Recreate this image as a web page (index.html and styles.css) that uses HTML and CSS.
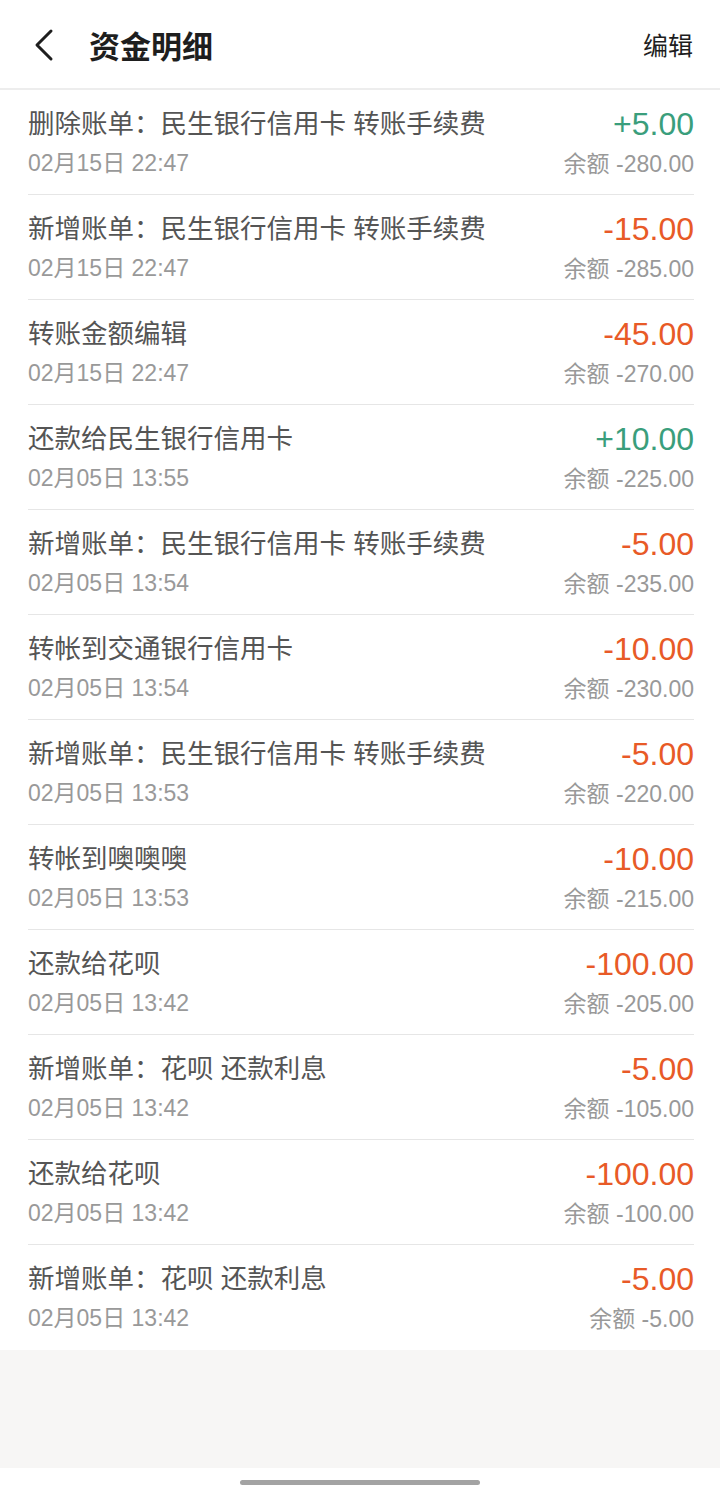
FILE: index.html
```html
<!DOCTYPE html>
<html lang="zh-CN">
<head>
  <meta charset="UTF-8">
  <meta name="viewport" content="width=device-width, initial-scale=1.0">
  <title>资金明细</title>
  <link rel="stylesheet" href="styles.css">
</head>
<body>
  <header class="top-bar">
    <svg class="back" width="24" height="36" viewBox="0 0 24 36">
      <path d="M19 4 L5 18 L19 32" fill="none" stroke="#1e1e1e" stroke-width="3" stroke-linecap="round" stroke-linejoin="round"/>
    </svg>
    <h1>资金明细</h1>
    <span class="edit">编辑</span>
  </header>

  <ul class="list">
    <li class="row">
      <div class="left"><div class="name">删除账单：民生银行信用卡 转账手续费</div><div class="time">02月15日 22:47</div></div>
      <div class="right"><div class="amount plus">+5.00</div><div class="balance">余额 -280.00</div></div>
    </li>
    <li class="row">
      <div class="left"><div class="name">新增账单：民生银行信用卡 转账手续费</div><div class="time">02月15日 22:47</div></div>
      <div class="right"><div class="amount minus">-15.00</div><div class="balance">余额 -285.00</div></div>
    </li>
    <li class="row">
      <div class="left"><div class="name">转账金额编辑</div><div class="time">02月15日 22:47</div></div>
      <div class="right"><div class="amount minus">-45.00</div><div class="balance">余额 -270.00</div></div>
    </li>
    <li class="row">
      <div class="left"><div class="name">还款给民生银行信用卡</div><div class="time">02月05日 13:55</div></div>
      <div class="right"><div class="amount plus">+10.00</div><div class="balance">余额 -225.00</div></div>
    </li>
    <li class="row">
      <div class="left"><div class="name">新增账单：民生银行信用卡 转账手续费</div><div class="time">02月05日 13:54</div></div>
      <div class="right"><div class="amount minus">-5.00</div><div class="balance">余额 -235.00</div></div>
    </li>
    <li class="row">
      <div class="left"><div class="name">转帐到交通银行信用卡</div><div class="time">02月05日 13:54</div></div>
      <div class="right"><div class="amount minus">-10.00</div><div class="balance">余额 -230.00</div></div>
    </li>
    <li class="row">
      <div class="left"><div class="name">新增账单：民生银行信用卡 转账手续费</div><div class="time">02月05日 13:53</div></div>
      <div class="right"><div class="amount minus">-5.00</div><div class="balance">余额 -220.00</div></div>
    </li>
    <li class="row">
      <div class="left"><div class="name">转帐到噢噢噢</div><div class="time">02月05日 13:53</div></div>
      <div class="right"><div class="amount minus">-10.00</div><div class="balance">余额 -215.00</div></div>
    </li>
    <li class="row">
      <div class="left"><div class="name">还款给花呗</div><div class="time">02月05日 13:42</div></div>
      <div class="right"><div class="amount minus">-100.00</div><div class="balance">余额 -205.00</div></div>
    </li>
    <li class="row">
      <div class="left"><div class="name">新增账单：花呗 还款利息</div><div class="time">02月05日 13:42</div></div>
      <div class="right"><div class="amount minus">-5.00</div><div class="balance">余额 -105.00</div></div>
    </li>
    <li class="row">
      <div class="left"><div class="name">还款给花呗</div><div class="time">02月05日 13:42</div></div>
      <div class="right"><div class="amount minus">-100.00</div><div class="balance">余额 -100.00</div></div>
    </li>
    <li class="row">
      <div class="left"><div class="name">新增账单：花呗 还款利息</div><div class="time">02月05日 13:42</div></div>
      <div class="right"><div class="amount minus">-5.00</div><div class="balance">余额 -5.00</div></div>
    </li>
  </ul>

  <div class="empty"></div>
  <div class="home-bar"><span></span></div>
</body>
</html>
```

FILE: styles.css
```css
body {
  margin: 0;
  background: #fff;
  font-family: 'Liberation Sans', 'Noto Sans CJK SC', sans-serif;
  width: 720px;
}

.top-bar {
  height: 88px;
  display: flex;
  align-items: center;
  padding: 0 27px 0 32px;
  border-bottom: 2px solid #ededed;
}

.back {
  display: block;
  margin-top: 2px;
}

.top-bar h1 {
  flex: 1;
  margin: 0 0 0 33px;
  font-size: 31px;
  font-weight: bold;
  color: #1e1e1e;
}

.edit {
  font-size: 25px;
  color: #1e1e1e;
}

.list {
  list-style: none;
  margin: 0;
  padding: 0 26px 0 28px;
}

.row {
  height: 104px;
  display: flex;
  justify-content: space-between;
  border-bottom: 1px solid #e6e6e6;
  box-sizing: content-box;
}

.row:last-child {
  border-bottom: none;
}

.left, .right {
  padding-top: 16px;
}

.right {
  text-align: right;
}

.name {
  font-size: 26.5px;
  line-height: 36px;
  color: #555;
}

.time {
  margin-top: 3px;
  font-size: 23px;
  line-height: 36px;
  color: #999;
}

.amount {
  font-size: 32px;
  line-height: 36px;
}

.plus {
  color: #3a9e7c;
}

.minus {
  color: #e85a27;
}

.balance {
  margin-top: 4px;
  font-size: 23px;
  line-height: 36px;
  color: #999;
}

.empty {
  height: 118px;
  margin-top: 1px;
  background: #f7f6f5;
}

.home-bar {
  height: 20px;
  display: flex;
  justify-content: center;
  align-items: flex-start;
  padding-top: 12px;
  box-sizing: border-box;
}

.home-bar span {
  width: 240px;
  height: 5px;
  border-radius: 3px;
  background: #a3a3a3;
}
```
